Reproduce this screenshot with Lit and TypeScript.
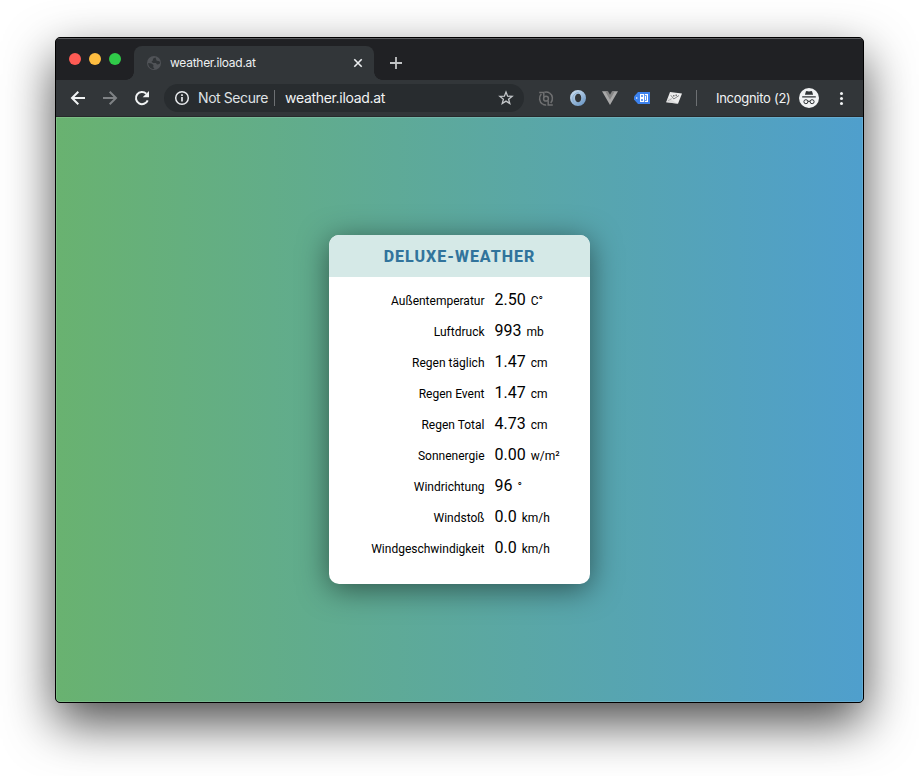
import { LitElement, html, css, svg } from "lit";
import { customElement } from "lit/decorators.js";

const ROWS: [string, string, string][] = [
  ["Außentemperatur", "2.50", "C°"],
  ["Luftdruck", "993", "mb"],
  ["Regen täglich", "1.47", "cm"],
  ["Regen Event", "1.47", "cm"],
  ["Regen Total", "4.73", "cm"],
  ["Sonnenergie", "0.00", "w/m²"],
  ["Windrichtung", "96", "°"],
  ["Windstoß", "0.0", "km/h"],
  ["Windgeschwindigkeit", "0.0", "km/h"],
];

@customElement("weather-card")
export class WeatherCard extends LitElement {
  static styles = css`
    :host {
      display: block;
      box-sizing: border-box;
      width: 261px;
      height: 349px;
      border-radius: 10px;
      overflow: hidden;
      background: #fff;
      color: #000;
      font-family: Roboto, sans-serif;
      box-shadow: 0 5px 30px rgba(0, 0, 0, 0.5);
    }
    .title {
      height: 42px;
      line-height: 43px;
      margin: 0;
      text-align: center;
      background: #d5e9e7;
      color: #31749c;
      font-size: 16px;
      font-weight: 800;
      letter-spacing: 1px;
    }
    .rows { padding-top: 7px; }
    .row {
      display: flex;
      align-items: baseline;
      height: 31px;
      line-height: 31px;
      white-space: nowrap;
    }
    .label { width: 155.5px; text-align: right; font-size: 12px; }
    .value { margin-left: 10px; font-size: 16px; }
    .unit { margin-left: 5px; font-size: 12px; }
  `;
  render() {
    return html`
      <h1 class="title">DELUXE-WEATHER</h1>
      <div class="rows">
        ${ROWS.map(
          ([l, v, u]) => html`<div class="row">
            <span class="label">${l}</span><span class="value">${v}</span><span class="unit">${u}</span>
          </div>`
        )}
      </div>
    `;
  }
}

const icon = (size: number, body: unknown) =>
  html`<svg width=${size} height=${size} viewBox="0 0 ${size} ${size}" fill="none">${body}</svg>`;

const back = icon(16, svg`<path d="M15 8H2.5M8.3 1.7L2 8l6.3 6.3" stroke="#f1f3f4" stroke-width="2"/>`);
const forward = icon(16, svg`<path d="M1 8h12.500M7.700 1.700L14 8l-6.300 6.300" stroke="#7f8285" stroke-width="2"/>`);
const reload = icon(16, svg`<path d="M13.700 10.300A6.100 6.100 0 1 1 12.300 3.700" stroke="#f1f3f4" stroke-width="2"/><path d="M15 1v6.300H8.700z" fill="#f1f3f4"/>`);
const info = icon(16, svg`<circle cx="8" cy="8" r="6.300" stroke="#e8eaed" stroke-width="1.500"/><path d="M8 7v4.500M8 4.300v1.700" stroke="#e8eaed" stroke-width="1.700"/>`);
const star = icon(16, svg`<path d="M8 2l1.600 4.200 4.500.2-3.500 2.800 1.200 4.300L8 11.100l-3.800 2.400 1.200-4.300L1.900 6.400l4.500-.2z" stroke="#c3c6c9" stroke-width="1.300"/>`);
const sync = icon(16, svg`<g stroke="#6f7071" stroke-width="1.500"><path d="M4.600 14.200A6.800 6.800 0 0 1 3.300 4M11.400 2.800A6.800 6.800 0 0 1 12.700 13"/><path d="M1.200 2.600h4.600v4.200M14.800 15h-4.600v-4.200"/><path d="M6.500 2.200A6.500 6.500 0 0 1 11.400 2.800M4.600 14.200q2 1 3.600.7"/><circle cx="8" cy="8.700" r="2.400"/></g>`);
const ring = html`<svg width="16" height="16" viewBox="0 0 16 16">
  <defs><linearGradient id="r" x1="0" y1="0" x2=".7" y2="1"><stop stop-color="#cfe0f0"/><stop offset=".5" stop-color="#a4c1de"/><stop offset="1" stop-color="#6e99c6"/></linearGradient></defs>
  <path fill="url(#r)" fill-rule="evenodd" d="M8 0a8 8 0 1 0 0 16A8 8 0 0 0 8 0zM8.300 3.800c1.900 0 2.900 2 2.900 4.200S10.200 12.200 8.300 12.200 5 10.400 5 8s1.400-4.200 3.300-4.200z"/>
  <path d="M4 12.500C1.500 9 2.500 3.500 8.500 2.500M14 8c.2 3.500-3 6-6.500 5.500" fill="none" stroke="#7fa6ce" stroke-width=".8"/>
</svg>`;
const vue = icon(16, svg`<path d="M0 1.200h5.200L8 6.200l2.800-5H16L8 15z" fill="#a8a8a8"/><path d="M3.200 1.200H6l2 3.600 2-3.600h2.800L8 9.700z" fill="#858585"/>`);
const tag = icon(16, svg`<path d="M4 2h12v12H4L0 9.500v-3z" fill="#3c82ee"/><circle cx="2.700" cy="8" r=".8" fill="#fff"/><path d="M6 4h8v8H6z" fill="#fff"/><path d="M7 5.200h2v1.600H7zM7 9.200h2v1.600H7z" fill="#3c82ee"/><path d="M10.500 4v8M11 5.500h1.500v5H11" stroke="#3c82ee" stroke-width=".8"/>`);
const mail = icon(16, svg`<path d="M4 2L16 3.500l-4 10.300L.2 12.300z" fill="#ececec"/><path d="M4.800 5.200l3 3.800L13 5.500M2 10.800l3.500-2" stroke="#77797a" stroke-width=".9"/><path d="M7 5h1.500v1.500H7zM9.500 4.500H11V6H9.500z" fill="#77797a"/><path d="M.2 12.300l2-4.500 9.700 6z" fill="#d3d4d4" opacity=".6"/>`);
const incognito = icon(20, svg`<circle cx="10" cy="10" r="10" fill="#f1f3f4"/><path d="M6.900 3.500l.6-.4 2.500.5 2.500-.5.600.4 1 3.200H5.900z" fill="#2f3336"/><path d="M3.200 8.800h13.600M9 13.400q1-.6 2 0" stroke="#2f3336" stroke-width="1.200"/><circle cx="6.900" cy="13.700" r="2" stroke="#2f3336"/><circle cx="13.100" cy="13.700" r="2" stroke="#2f3336"/>`);
const menu = icon(16, svg`<g fill="#f1f3f4"><circle cx="8.500" cy="3.500" r="1.500"/><circle cx="8.500" cy="8.500" r="1.500"/><circle cx="8.500" cy="13.500" r="1.500"/></g>`);
const globe = icon(14, svg`<circle cx="7" cy="7" r="7" fill="#505357"/><path d="M8.500 1.500c-2 .3-3 1.500-2.500 2.700L4.500 5.500 6 7h3l1 1.500 2.500-.5.700-2-1.500-1-2-.2-.5-1.300zM1.200 7l3.300.5L6.500 9l-.3 2 1.300 2C3.500 13.300 1.200 10.500 1.200 7z" fill="#303437"/>`);
const close = icon(10, svg`<path d="M1.300 1.300l7.400 7.400M8.700 1.300L1.300 8.700" stroke="#eceef0" stroke-width="1.600"/>`);
const plus = icon(12, svg`<path d="M6 0v12M0 6h12" stroke="#c2c4c6" stroke-width="1.800"/>`);

@customElement("app-root")
export class AppRoot extends LitElement {
  static styles = css`
    :host {
      display: block;
      box-sizing: border-box;
      width: 919px;
      height: 776px;
      padding: 37px 0 0 55px;
      overflow: hidden;
      background: #fff;
      font-family: Inter, "Liberation Sans", sans-serif;
    }
    svg { display: block; flex: none; }
    .window {
      box-sizing: border-box;
      width: 809px;
      height: 666px;
      border: 1px solid #000;
      border-radius: 5px;
      overflow: hidden;
      display: flex;
      flex-direction: column;
      box-shadow: 0 20px 50px rgba(0, 0, 0, 0.7);
      background: #202124;
      white-space: nowrap;
    }
    .tabs {
      box-sizing: border-box;
      flex: none;
      height: 42px;
      display: flex;
      background: #202124;
      border-top: 1px solid #5c5d60;
    }
    .lights { display: flex; gap: 8px; padding: 14px 0 0 13px; width: 65px; }
    .light { width: 12px; height: 12px; border-radius: 50%; }
    .red { background: #fe5b54; }
    .yellow { background: #febd40; }
    .green { background: #30cb49; }
    .tab {
      position: relative;
      box-sizing: border-box;
      width: 240px;
      height: 34px;
      margin-top: 7px;
      padding: 0 11px 0 13px;
      border-radius: 8px 8px 0 0;
      background: #323639;
      color: #eef0f1;
      display: flex;
      align-items: center;
      font-size: 12px;
    }
    .tab::before, .tab::after {
      content: "";
      position: absolute;
      bottom: 0;
      width: 8px;
      height: 8px;
    }
    .tab::before { left: -8px; background: radial-gradient(circle at 0 0, transparent 7.5px, #323639 8px); }
    .tab::after { right: -8px; background: radial-gradient(circle at 100% 0, transparent 7.5px, #323639 8px); }
    .name { flex: 1; margin-left: 9px; letter-spacing: -0.27px; line-height: 14px; padding-bottom: 1px; }
    .plus { padding: 18px 0 0 16px; }
    .bar {
      box-sizing: border-box;
      flex: none;
      height: 37px;
      padding-left: 6px;
      border-bottom: 1px solid #27292b;
      background: #323639;
      color: #f1f3f4;
      display: flex;
      align-items: center;
    }
    .btn { width: 32px; display: flex; justify-content: center; }
    .omni {
      box-sizing: border-box;
      width: 360px;
      height: 28px;
      margin: 0 6px;
      padding: 0 10px;
      border-radius: 14px;
      background: #282c2f;
      display: flex;
      align-items: center;
      font-size: 14px;
    }
    .secure, .url { line-height: 16px; padding-bottom: 1px; }
    .secure { margin-left: 8px; width: 76px; color: #dfe1e4; letter-spacing: -0.42px; }
    .sep { width: 1px; height: 16px; background: #6d7073; }
    .url { flex: 1; margin-left: 10px; letter-spacing: -0.31px; }
    .outer { margin-left: 6px; }
    .mode { width: 83px; margin-left: 19px; font-size: 13px; letter-spacing: -0.28px; }
    .more { margin-left: 14px; }
    .page {
      flex: 1;
      display: flex;
      align-items: center;
      justify-content: center;
      background: linear-gradient(to right, #69b270, #4f9fcd);
      box-shadow: inset 0 0 0 1px rgba(255, 255, 255, 0.13);
      border-radius: 0 0 4px 4px;
    }
  `;
  render() {
    return html`
      <div class="window">
        <div class="tabs">
          <div class="lights">
            <span class="light red"></span><span class="light yellow"></span><span class="light green"></span>
          </div>
          <div class="tab">${globe}<span class="name">weather.iload.at</span>${close}</div>
          <div class="plus">${plus}</div>
        </div>
        <div class="bar">
          <span class="btn">${back}</span><span class="btn">${forward}</span><span class="btn">${reload}</span>
          <div class="omni">
            ${info}<span class="secure">Not Secure</span><span class="sep"></span>
            <span class="url">weather.iload.at</span>${star}
          </div>
          ${[sync, ring, vue, tag, mail].map((i) => html`<span class="btn">${i}</span>`)}
          <span class="sep outer"></span>
          <span class="mode">Incognito (2)</span>${incognito}<span class="more">${menu}</span>
        </div>
        <main class="page"><weather-card></weather-card></main>
      </div>
    `;
  }
}
